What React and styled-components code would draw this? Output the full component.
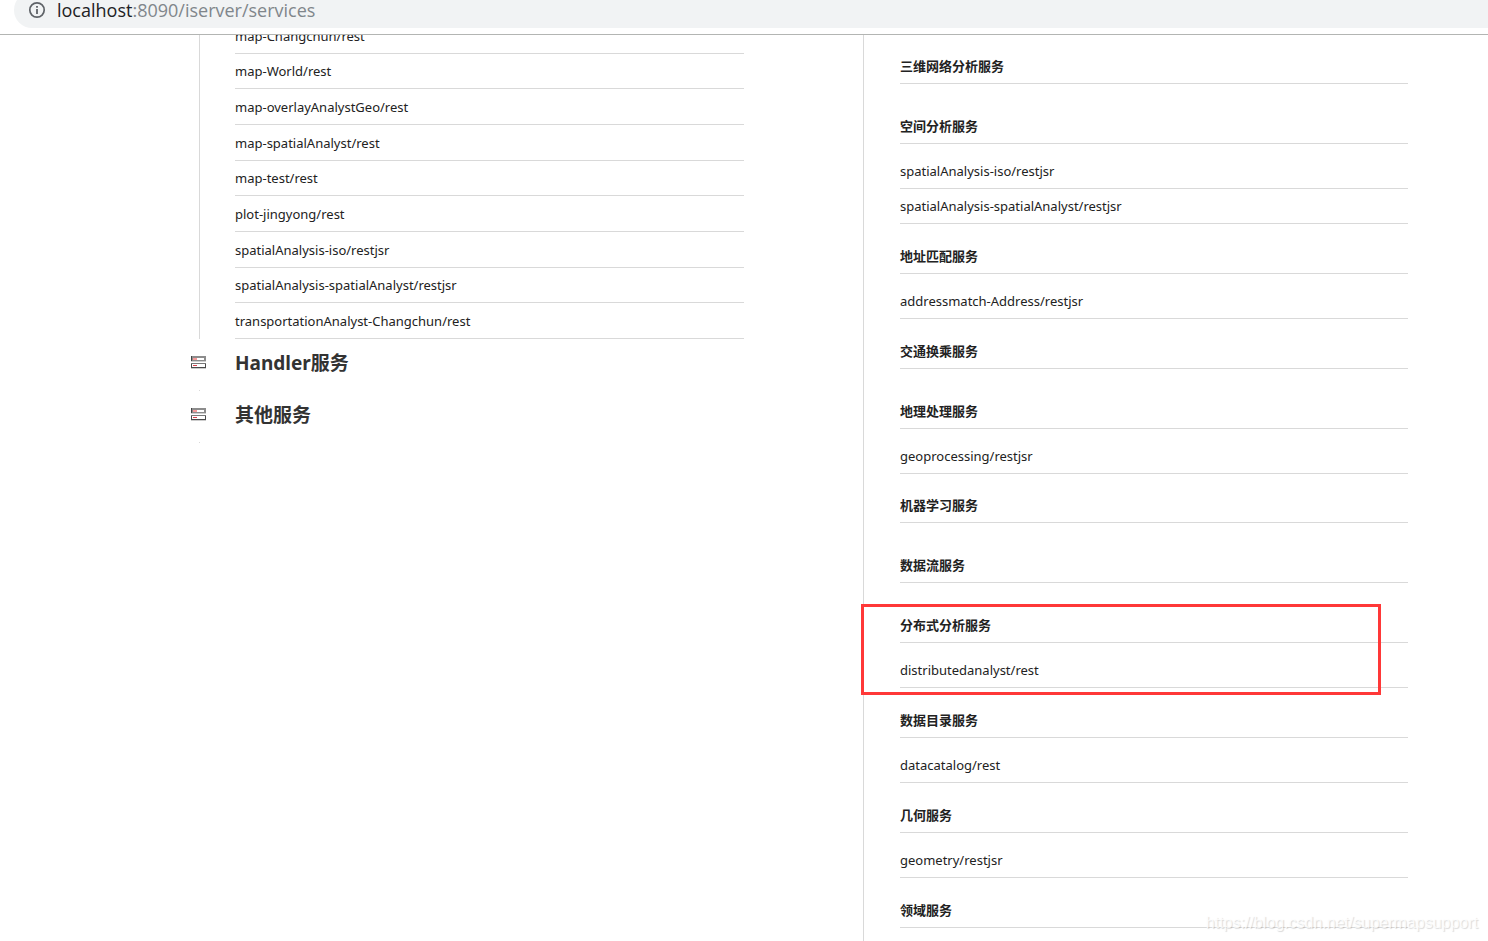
import React from 'react';
import styled, { createGlobalStyle } from 'styled-components';

const GlobalStyle = createGlobalStyle`
  * {
    box-sizing: border-box;
  }
  body {
    margin: 0;
    background: #fff;
    color: #222;
    font-family: 'Noto Sans', 'Noto Sans CJK SC', sans-serif;
    font-size: 13px;
  }
`;

const Browser = styled.div`
  display: flex;
  flex-direction: column;
  height: 100vh;
  overflow: hidden;
  position: relative;
`;
const Toolbar = styled.header`
  height: 35px;
  flex: none;
  overflow: hidden;
  padding-left: 14px;
  border-bottom: 1px solid #b3b5b3;
`;
const AddressBar = styled.div`
  display: flex;
  align-items: center;
  gap: 11px;
  height: 36px;
  margin-top: -8px;
  padding-left: 14px;
  border-radius: 18px 0 0 18px;
  background: #f1f3f4;
`;
const Url = styled.div`
  font-family: 'Open Sans', sans-serif;
  font-size: 18px;
  line-height: 20px;
  color: #80868b;

  span {
    color: #202124;
  }
`;
const Viewport = styled.main`
  flex: 1;
  min-height: 0;
  overflow: hidden;
`;
const Columns = styled.div`
  display: grid;
  grid-template-columns: 1fr 1fr;
  gap: 119px;
  margin-top: -17px;
  padding: 0 80px 0 199px;
`;
const Column = styled.div`
  min-width: 0;
`;
const ServiceTree = styled(Column)`
  padding: 16px 0 40px 36px;
  border-left: 1px solid #d9d9d9;
`;
const List = styled.ul`
  list-style: none;
  margin: 0;
  padding: 0;
`;
const RootList = styled(List)`
  padding-left: 35px;
  border-left: 1px solid #d9d9d9;
`;
const SectionList = styled(List)`
  padding-top: 10px;
`;
const Item = styled.li`
  line-height: 34px;
  border-bottom: 1px solid #d9d9d9;

  ${RootList} & {
    padding-top: 1px;
  }
  ${RootList} &:nth-child(3n + 2) {
    padding-top: 0;
  }
`;
const ServiceLink = styled.a`
  color: inherit;
  text-decoration: none;
`;
const Section = styled.section`
  position: relative;
`;
const SectionTitle = styled.h4`
  margin: 0;
  padding-top: 15px;
  font-size: 13px;
  font-weight: 700;
  line-height: 34px;
  border-bottom: 1px solid #d9d9d9;

  ${Section}:nth-child(6n) & {
    padding-top: 14px;
  }
`;
const Highlight = styled.div`
  position: absolute;
  top: 11px;
  right: 27px;
  bottom: -7px;
  left: -39px;
  border: 3px solid #ff3838;
  pointer-events: none;
`;
const Group = styled.section`
  &:after {
    content: '';
    display: block;
    width: 1px;
    height: 1px;
    margin-top: 5px;
    background: #d9d9d9;
  }
`;
const GroupTitle = styled.h3`
  display: flex;
  align-items: center;
  gap: 28px;
  height: 46px;
  margin: 0 0 0 -8px;
  font-size: 19px;
  font-weight: 700;
  color: #333;
`;
const Watermark = styled.div`
  position: absolute;
  right: 10px;
  bottom: 9px;
  font-family: 'Liberation Sans', sans-serif;
  font-size: 16px;
  line-height: 18px;
  color: rgba(255, 255, 255, 0.8);
  text-shadow: 1px 1px 1px rgba(0, 0, 0, 0.15);
`;

const allServices = [
  'map-Changchun/rest',
  'map-World/rest',
  'map-overlayAnalystGeo/rest',
  'map-spatialAnalyst/rest',
  'map-test/rest',
  'plot-jingyong/rest',
  'spatialAnalysis-iso/restjsr',
  'spatialAnalysis-spatialAnalyst/restjsr',
  'transportationAnalyst-Changchun/rest',
];

const sections = [
  { title: '三维网络分析服务', services: [] },
  {
    title: '空间分析服务',
    services: [
      'spatialAnalysis-iso/restjsr',
      'spatialAnalysis-spatialAnalyst/restjsr',
    ],
  },
  { title: '地址匹配服务', services: ['addressmatch-Address/restjsr'] },
  { title: '交通换乘服务', services: [] },
  { title: '地理处理服务', services: ['geoprocessing/restjsr'] },
  { title: '机器学习服务', services: [] },
  { title: '数据流服务', services: [] },
  {
    title: '分布式分析服务',
    services: ['distributedanalyst/rest'],
    highlighted: true,
  },
  { title: '数据目录服务', services: ['datacatalog/rest'] },
  { title: '几何服务', services: ['geometry/restjsr'] },
  { title: '领域服务', services: [] },
];

const InfoIcon = () => (
  <svg width="18" height="18" viewBox="0 0 18 18" fill="none">
    <circle cx="9" cy="9" r="7.2" stroke="#5f6368" strokeWidth="1.7" />
    <path d="M9 8v5M9 5v1.8" stroke="#5f6368" strokeWidth="1.8" />
  </svg>
);

const ServerIcon = () => (
  <svg width="16" height="14" viewBox="0 0 16 14" shapeRendering="crispEdges">
    <path d="M0 1h15v5H0z" fill="#8c8c8c" />
    <path d="M0 1h1v5H0z" fill="#444" />
    <path d="M2 3h11v2H2z" fill="#fff" />
    <path d="M2 3h4v2H2z" fill="#f49a9a" />
    <path d="M0 6h15v1H0z" fill="#d0d0d0" />
    <path d="M0 8h15v5H0z" fill="#4a4a4a" />
    <path d="M0 8h15v1H0z" fill="#777" />
    <path d="M1 9h13v3H1z" fill="#fff" />
    <path d="M2 10h4v1H2z" fill="#d9434e" />
    <path d="M0 13h15v1H0z" fill="#ccc" />
  </svg>
);

const ServiceItem = ({ name }) => (
  <Item>
    <ServiceLink href={`/iserver/services/${name}`}>{name}</ServiceLink>
  </Item>
);

const App = () => (
  <>
    <GlobalStyle />
    <Browser>
      <Toolbar>
        <AddressBar>
          <InfoIcon />
          <Url>
            <span>localhost</span>:8090/iserver/services
          </Url>
        </AddressBar>
      </Toolbar>
      <Viewport>
        <Columns>
          <Column>
            <RootList>
              {allServices.map(name => (
                <ServiceItem key={name} name={name} />
              ))}
            </RootList>
            {['Handler服务', '其他服务'].map(title => (
              <Group key={title}>
                <GroupTitle>
                  <ServerIcon />
                  {title}
                </GroupTitle>
              </Group>
            ))}
          </Column>
          <ServiceTree>
            {sections.map(({ title, services, highlighted }) => (
              <Section key={title}>
                <SectionTitle>{title}</SectionTitle>
                <SectionList>
                  {services.map(name => (
                    <ServiceItem key={name} name={name} />
                  ))}
                </SectionList>
                {highlighted ? <Highlight /> : null}
              </Section>
            ))}
          </ServiceTree>
        </Columns>
      </Viewport>
      <Watermark>https://blog.csdn.net/supermapsupport</Watermark>
    </Browser>
  </>
);

export default App;
